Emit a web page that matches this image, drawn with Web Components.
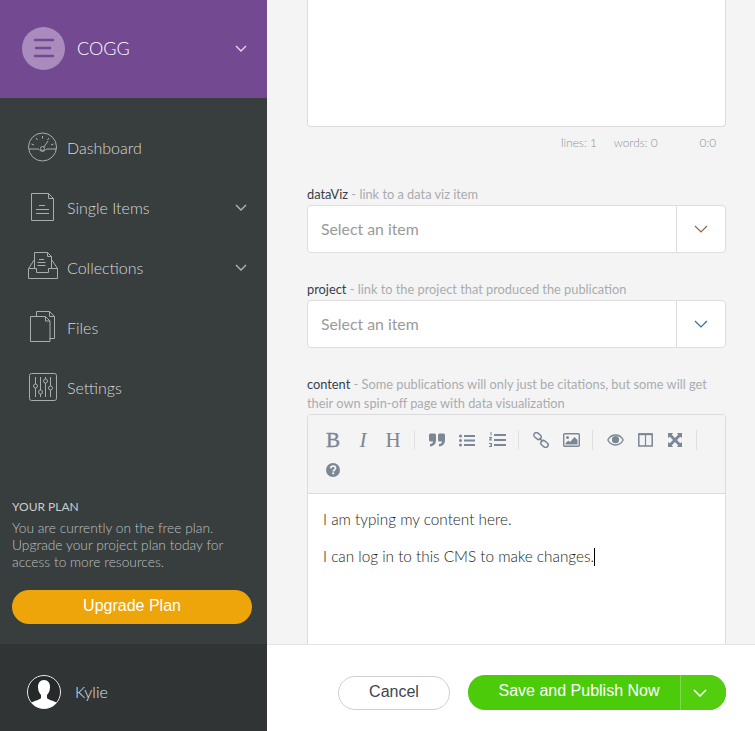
<!DOCTYPE html>
<html>
<head>
<meta charset="utf-8">
<title>COGG</title>
<style>
    html, body { margin: 0; padding: 0; height: 100%; }
    body { font-family: Lato, "Open Sans", sans-serif; overflow: hidden; }
    cms-app { height: 731px; }
    /* spacing between the fields lives on the light DOM */
    field-block { margin-bottom: 32px; }
    select-field { margin-bottom: 27px; }
    .caret { display: inline-block; width: 1px; height: 18px; background: #000; vertical-align: -4px; }
</style>
</head>
<body>
<cms-app>
    <side-bar slot="side">
        <nav-item label="Dashboard">
            <svg width="32" height="32" viewBox="0 0 32 32" fill="none" stroke="#a9adad" stroke-width="1">
                <circle cx="15.5" cy="16" r="14"/>
                <path d="M2 18h9q1 0 2 1.5q2.5 2 5 0q1-1.5 2-1.5h9.500"/>
                <circle cx="15.5" cy="17.5" r="2"/>
                <path d="M17 16l4-6M15.5 5v2.5M9 7l1.5 2M22 7l-1.5 2M4.500 13l2.500 1M26.500 13l-2.500 1"/>
            </svg>
        </nav-item>
        <nav-item label="Single Items" arrow>
            <svg width="32" height="32" viewBox="0 0 32 32" fill="none" stroke="#a9adad" stroke-width="1">
                <path d="M4.500 2.500h17l5 5v22h-22zM21.500 2.500v5h5"/>
                <path d="M12 14.500h6M9 18.500h13M9 22.500h13"/>
            </svg>
        </nav-item>
        <nav-item label="Collections" arrow>
            <svg width="32" height="32" viewBox="0 0 32 32" fill="none" stroke="#a9adad" stroke-width="1">
                <path d="M7.500 13V1.500h13l4 4V13M20.500 1.500v4h4"/>
                <path d="M12 8.500h5M10.500 11.500h8M10.500 14.500h8"/>
                <path d="M7.500 8.500l-6 9v10h29v-10l-6-9"/>
                <path d="M1.500 17.500h8v4h12v-4h9M7.500 13v4.500M24.500 13v4.500"/>
            </svg>
        </nav-item>
        <nav-item label="Files">
            <svg width="32" height="32" viewBox="0 0 32 32" fill="none" stroke="#a9adad" stroke-width="1">
                <path d="M9.500 5V0.500h13l5 5v22h-5"/>
                <path d="M22.500 0.500v5h5"/>
                <path d="M3.500 5.500h15l4.500 4.500v20.500H3.500zM18.500 5.500V10H23"/>
            </svg>
        </nav-item>
        <nav-item label="Settings">
            <svg width="32" height="32" viewBox="0 0 32 32" fill="none" stroke="#a9adad" stroke-width="1">
                <rect x="2.500" y="2.500" width="27" height="27" rx="2"/>
                <path d="M8.500 6v7M8.500 17v9M13.500 6v13M13.500 23v3M18.500 6v2M18.500 12v14M23.500 6v9M23.500 19v7"/>
                <circle cx="8.500" cy="15" r="2"/><circle cx="13.500" cy="21" r="2"/>
                <circle cx="18.500" cy="10" r="2"/><circle cx="23.500" cy="17" r="2"/>
            </svg>
        </nav-item>
    </side-bar>
    <field-block slot="main"></field-block>
    <select-field slot="main" name="dataViz" hint="link to a data viz item"></select-field>
    <select-field slot="main" name="project" hint="link to the project that produced the publication" accent></select-field>
    <md-editor slot="main" name="content" hint="Some publications will only just be citations, but some will get" hint2="their own spin-off page with data visualization">
        <p>I am typing my content here.</p>
        <p>I can log in to this CMS to make changes.<span class="caret"></span></p>
    </md-editor>
    <action-bar slot="bar"></action-bar>
</cms-app>

<script>
// Page shell: sidebar column + scrolled main column with a fixed action bar
class CmsApp extends HTMLElement {
    constructor() {
        super();
        this.attachShadow({ mode: 'open' });
    }
    connectedCallback() {
        this.shadowRoot.innerHTML = `
            <style>
                :host { display: grid; grid-template-columns: 267px 1fr; width: 755px; overflow: hidden; }
                .main { display: flex; flex-direction: column; height: 731px; min-width: 0; background: #f4f4f4; }
                .scroll { flex: 1; min-height: 0; overflow: hidden; padding: 0 29px 0 40px; }
            </style>
            <slot name="side"></slot>
            <div class="main">
                <div class="scroll"><slot name="main"></slot></div>
                <slot name="bar"></slot>
            </div>
        `;
    }
}

class SideBar extends HTMLElement {
    constructor() {
        super();
        this.attachShadow({ mode: 'open' });
    }
    connectedCallback() {
        this.shadowRoot.innerHTML = `
            <style>
                :host { display: flex; flex-direction: column; height: 731px; background: #383d3e; color: #d5d9d9; }
                .brand { display: flex; align-items: center; height: 98px; box-sizing: border-box; padding: 0 20px 2px 22px; background: #734a91; color: #fff; }
                .logo { width: 43px; height: 43px; border-radius: 50%; background: #a98bbe; display: flex; align-items: center; justify-content: center; }
                .name { margin-left: 12px; flex: 1; font-size: 18px; font-weight: 300; }
                nav { padding-top: 19px; flex: 1; }
                .plan { padding: 0 15px 20px 12px; color: #bdc1c1; }
                .plan h4 { margin: 0 0 4px; font-size: 12px; line-height: 16px; font-weight: 400; color: #c9cdcd; }
                .plan p { margin: 0 0 20px; font-size: 13.75px; line-height: 17px; font-weight: 300; }
                .upgrade { display: block; height: 34px; border-radius: 17px; background: #eea509; color: #fff; text-align: center; font: 16px/32px "Liberation Sans", Arial, sans-serif; }
                .user { display: flex; align-items: center; height: 87px; box-sizing: border-box; padding: 8px 0 0 27px; background: #303435; color: #e0e3e3; font-size: 16px; font-weight: 300; }
                .user span { margin-left: 14px; }
            </style>
            <div class="brand">
                <div class="logo">
                    <svg width="22" height="20" viewBox="0 0 22 20" fill="none" stroke="#734a91" stroke-width="2.500" stroke-linecap="round">
                        <path d="M2 2h18M3 10h14M2 18h18"/>
                    </svg>
                </div>
                <div class="name">COGG</div>
                <svg width="12" height="7" viewBox="0 0 12 7" fill="none" stroke="#e6dcec" stroke-width="1.300"><path d="M1 1l5 5 5-5"/></svg>
            </div>
            <nav><slot></slot></nav>
            <div class="plan">
                <h4>YOUR PLAN</h4>
                <p>You are currently on the free plan. Upgrade your project plan today for access to more resources.</p>
                <a class="upgrade">Upgrade Plan</a>
            </div>
            <div class="user">
                <svg width="34" height="34" viewBox="0 0 34 34">
                    <defs><clipPath id="av"><circle cx="17" cy="17" r="16.500"/></clipPath></defs>
                    <circle cx="17" cy="17" r="16.500" fill="#26292a" stroke="#e8e8e8"/>
                    <path clip-path="url(#av)" fill="#fff" d="M17 5c4 0 6 3 6 7 0 3-1 6-3 8v3c1 2 8 3 10 5 1 1 2 3 2 6H2c0-3 1-5 2-6 2-2 9-3 10-5v-3c-2-2-3-5-3-8 0-4 2-7 6-7z"/>
                </svg>
                <span>Kylie</span>
            </div>
        `;
    }
}

// One row of the sidebar menu, icon comes in through the slot
class NavItem extends HTMLElement {
    constructor() {
        super();
        this.attachShadow({ mode: 'open' });
    }
    connectedCallback() {
        const arrow = this.hasAttribute('arrow') ? `
            <svg width="12" height="7" viewBox="0 0 12 7" fill="none" stroke="#b3b7b7" stroke-width="1.300"><path d="M1 1l5 5 5-5"/></svg>` : '';
        this.shadowRoot.innerHTML = `
            <style>
                :host { display: flex; align-items: center; height: 60px; padding: 0 20px 0 27px; font-size: 16px; font-weight: 300; color: #d5d9d9; }
                .icon { width: 32px; height: 32px; display: flex; }
                .label { margin-left: 8px; flex: 1; }
            </style>
            <span class="icon"><slot></slot></span>
            <span class="label">${this.getAttribute('label')}</span>
            ${arrow}
        `;
    }
}

// Bottom part of the textarea that is scrolled off the top, with its status line
class FieldBlock extends HTMLElement {
    constructor() {
        super();
        this.attachShadow({ mode: 'open' });
    }
    connectedCallback() {
        this.shadowRoot.innerHTML = `
            <style>
                :host { display: block; }
                .box { height: 127px; box-sizing: border-box; background: #fff; border: 1px solid #dcdcdc; border-top: none; border-radius: 0 0 4px 4px; margin-bottom: 7px; }
                .status { display: flex; height: 19px; line-height: 17px; font-size: 11.8px; font-weight: 300; color: #8f9396; padding-right: 10px; }
                .lines { margin-left: 254px; }
                .words { margin-left: 17px; }
                .pos { margin-left: auto; }
            </style>
            <div class="box"></div>
            <div class="status"><span class="lines">lines: 1</span><span class="words">words: 0</span><span class="pos">0:0</span></div>
        `;
    }
}

class SelectField extends HTMLElement {
    constructor() {
        super();
        this.attachShadow({ mode: 'open' });
    }
    connectedCallback() {
        const chevron = this.hasAttribute('accent') ? '#3b6a94' : '#8a6a45';
        this.shadowRoot.innerHTML = `
            <style>
                :host { display: block; font-size: 12.8px; }
                label { display: block; height: 20px; line-height: 18px; color: #a9acaf; }
                b { font-weight: 400; color: #34404c; }
                .select { display: flex; height: 48px; box-sizing: border-box; background: #fff; border: 1px solid #dedede; border-radius: 4px; }
                .value { flex: 1; padding-left: 13px; font-size: 15.8px; line-height: 46px; color: #9a9a9a; }
                .btn { width: 48px; border-left: 1px solid #dedede; display: flex; align-items: center; justify-content: center; }
            </style>
            <label><b>${this.getAttribute('name')}</b> - ${this.getAttribute('hint')}</label>
            <div class="select">
                <div class="value">Select an item</div>
                <div class="btn">
                    <svg width="14" height="8" viewBox="0 0 14 8" fill="none" stroke="${chevron}" stroke-width="1.200"><path d="M1 1l6 6 6-6"/></svg>
                </div>
            </div>
        `;
    }
}

// Markdown editor: toolbar icons + the slotted text
class MdEditor extends HTMLElement {
    constructor() {
        super();
        this.attachShadow({ mode: 'open' });
    }
    connectedCallback() {
        const grey = '#7b8794';
        this.shadowRoot.innerHTML = `
            <style>
                :host { display: block; font-size: 12.8px; }
                label { display: block; line-height: 19px; color: #a9acaf; margin-bottom: 1px; }
                b { font-weight: 400; color: #34404c; }
                .box { background: #fff; border: 1px solid #dcdcdc; border-radius: 4px 4px 0 0; height: 300px; box-sizing: border-box; }
                .toolbar { display: flex; flex-wrap: wrap; align-items: center; padding: 10px 10px 8px; background: #f4f4f4; border-bottom: 1px solid #dcdcdc; border-radius: 4px 4px 0 0; }
                .tool { width: 30px; height: 30px; display: flex; align-items: center; justify-content: center; color: ${grey}; font: 21px/30px "Liberation Serif", serif; }
                .tool.i { font-style: italic; }
                .tool.b { -webkit-text-stroke: 0.4px ${grey}; }
                .sep { width: 1px; height: 20px; margin: 0 7px 0 6px; background: #dfdfdf; }
                .text { padding: 15px; font-size: 15.3px; font-weight: 300; line-height: 21px; color: #1c1c1c; }
                ::slotted(p) { margin: 0 0 16px; }
            </style>
            <label><b>${this.getAttribute('name')}</b> - ${this.getAttribute('hint')}<br>${this.getAttribute('hint2')}</label>
            <div class="box">
                <div class="toolbar">
                    <span class="tool b">B</span>
                    <span class="tool i">I</span>
                    <span class="tool">H</span>
                    <i class="sep"></i>
                    <span class="tool"><svg width="16" height="14" viewBox="0 0 16 14" fill="${grey}"><path d="M7 2v5c0 3.500-2 6-6 6.500v-2.500c2 0 3-1 3-2.500H1.500A1.500 1.500 0 0 1 0 7V2A1.500 1.500 0 0 1 1.500 .5h4A1.500 1.500 0 0 1 7 2zM16 2v5c0 3.500-2 6-6 6.500v-2.500c2 0 3-1 3-2.500h-2.500A1.500 1.500 0 0 1 9 7V2A1.500 1.500 0 0 1 10.500 .5h4A1.500 1.500 0 0 1 16 2z"/></svg></span>
                    <span class="tool"><svg width="16" height="13" viewBox="0 0 16 13" fill="${grey}"><circle cx="1.500" cy="2" r="1.500"/><circle cx="1.500" cy="6.500" r="1.500"/><circle cx="1.500" cy="11" r="1.500"/><path d="M5 1h11v2H5zM5 5.500h11v2H5zM5 10h11v2H5z"/></svg></span>
                    <span class="tool"><svg width="17" height="16" viewBox="0 0 17 16" fill="${grey}"><path d="M5 2h12v2H5zM5 7h12v2H5zM5 12h12v2H5z"/><path d="M1.500 0h1v3.500h-1zM0 5h3v1L1.500 7.500H3V8.500H0v-1L1.500 6H0zM0 11h3v4H0v-1h2v-.5H1v-1h1V12H0z"/></svg></span>
                    <i class="sep"></i>
                    <span class="tool"><svg width="16" height="16" viewBox="0 0 16 16" fill="none" stroke="${grey}" stroke-width="1.500"><rect x="0.500" y="1.500" width="8" height="5" rx="2.500" transform="rotate(40 4.500 4)"/><rect x="7.500" y="9.500" width="8" height="5" rx="2.500" transform="rotate(40 11.500 12)"/><path d="M6.500 6l3 3.500"/></svg></span>
                    <span class="tool"><svg width="17" height="14" viewBox="0 0 17 14"><rect x=".7" y=".7" width="15.600" height="12.600" rx="1" fill="none" stroke="${grey}" stroke-width="1.400"/><circle cx="4.500" cy="4.500" r="1.500" fill="${grey}"/><path fill="${grey}" d="M2.500 11.500V10l3-2.500 1.500 1.500 4.500-5 3 3v4.500z"/></svg></span>
                    <i class="sep"></i>
                    <span class="tool"><svg width="17" height="12" viewBox="0 0 17 12"><path fill="none" stroke="${grey}" stroke-width="1.300" d="M.8 6C2.500 2.800 5.300 1 8.500 1s6 1.800 7.700 5c-1.700 3.200-4.500 5-7.700 5S2.500 9.200.8 6z"/><circle cx="8.500" cy="5.700" r="3.600" fill="${grey}"/></svg></span>
                    <span class="tool"><svg width="15" height="14" viewBox="0 0 15 14" fill="none" stroke="${grey}"><rect x=".8" y="1" width="13.400" height="12" stroke-width="1.500"/><path d="M7.500 1v12" stroke-width="1.200"/><path d="M.8 1.200h13.400" stroke-width="2"/></svg></span>
                    <span class="tool"><svg width="14" height="14" viewBox="0 0 14 14" fill="${grey}"><path d="M0 0h5L3.800 1.800 7 5 10.200 1.800 9 0h5v5l-1.800-1.200L9 7l3.200 3.200L14 9v5H9l1.200-1.800L7 9l-3.200 3.200L5 14H0V9l1.800 1.200L5 7 1.800 3.800 0 5z"/></svg></span>
                    <i class="sep"></i>
                    <span class="tool"><svg width="14" height="14" viewBox="0 0 14 14"><circle cx="7" cy="7" r="7" fill="${grey}"/><path d="M4.600 5.300C4.800 4 5.800 3.200 7.100 3.200c1.400 0 2.400.9 2.400 2 0 1.800-2.200 1.800-2.200 3.200" fill="none" stroke="#f4f4f4" stroke-width="1.700"/><rect x="6.200" y="9.400" width="2" height="1.800" fill="#f4f4f4"/></svg></span>
                </div>
                <div class="text"><slot></slot></div>
            </div>
        `;
    }
}

class ActionBar extends HTMLElement {
    constructor() {
        super();
        this.attachShadow({ mode: 'open' });
    }
    connectedCallback() {
        this.shadowRoot.innerHTML = `
            <style>
                :host { display: flex; align-items: center; justify-content: flex-end; height: 87px; box-sizing: border-box; padding: 9px 29px 0 0; background: #fff; border-top: 1px solid #e4e4e4; font: 16px "Liberation Sans", Arial, sans-serif; }
                .cancel { width: 112px; height: 34px; box-sizing: border-box; line-height: 30px; border: 1px solid #cfcfcf; border-radius: 17px; text-align: center; color: #3c4650; margin-right: 18px; }
                .save { display: flex; height: 35px; border-radius: 17px; overflow: hidden; color: #fff; background: #4ccb0a; }
                .save span { box-sizing: border-box; width: 212px; line-height: 32px; text-align: center; padding-left: 10px; }
                .save i { width: 46px; border-left: 1px solid #7fd94f; display: flex; align-items: center; justify-content: center; padding-right: 8px; box-sizing: border-box; background: #52ce0e; }
            </style>
            <div class="cancel">Cancel</div>
            <div class="save">
                <span>Save and Publish Now</span>
                <i><svg width="14" height="8" viewBox="0 0 14 8" fill="none" stroke="#fff" stroke-width="1.500"><path d="M1 1l6 6 6-6"/></svg></i>
            </div>
        `;
    }
}

customElements.define('cms-app', CmsApp);
customElements.define('side-bar', SideBar);
customElements.define('nav-item', NavItem);
customElements.define('field-block', FieldBlock);
customElements.define('select-field', SelectField);
customElements.define('md-editor', MdEditor);
customElements.define('action-bar', ActionBar);
</script>
</body>
</html>
